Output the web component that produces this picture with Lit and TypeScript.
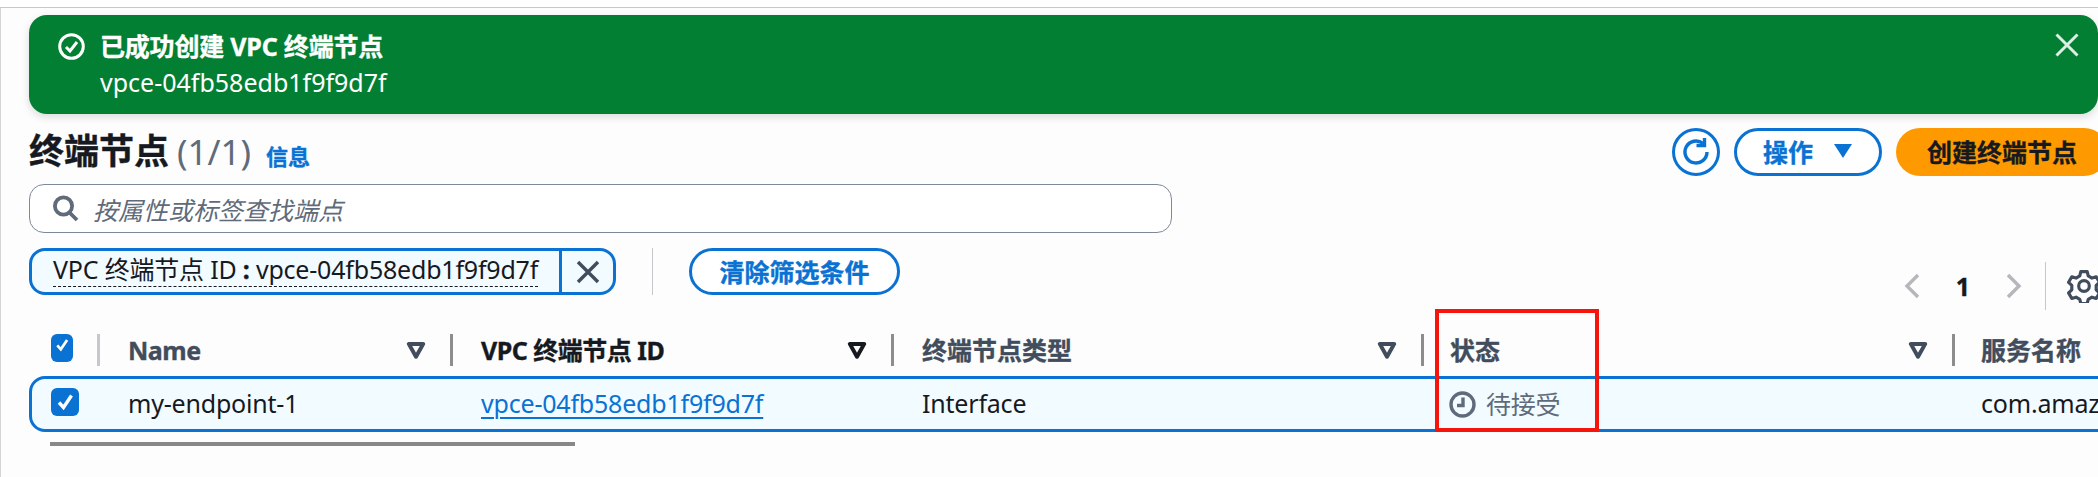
import { LitElement, html, css } from "lit";
import { customElement } from "lit/decorators.js";

const sortIcon = html`<svg class="sort" viewBox="0 0 18 18"><path d="M2.500 3.500h13L9 15z" fill="none" stroke="currentColor" stroke-width="3.600" stroke-linejoin="round"/></svg>`;
const checkIcon = html`<span class="check"><svg viewBox="0 0 28 28"><path d="M8 14.500l4.500 5L20.500 7.500" fill="none" stroke="#fff" stroke-width="3.400"/></svg></span>`;

@customElement("app-root")
export class AppRoot extends LitElement {
  static styles = css`
    :host {
      display: block;
      position: relative;
      width: 2098px;
      height: 477px;
      overflow: hidden;
      background: #fff;
      font-family: "Noto Sans", "Noto Sans CJK SC", sans-serif;
      font-size: 25px;
      color: #16191f;
    }
    b, .bold { -webkit-text-stroke: 0.35px currentColor; }
    .frame {
      box-sizing: border-box;
      height: 470px;
      margin-top: 7px;
      padding: 7px 0 0 28px;
      border-top: 1px solid #c8c8c8;
      border-left: 1px solid #d4d4d4;
      background: #fdfdfd;
    }
    .banner {
      display: flex;
      box-sizing: border-box;
      height: 99px;
      padding: 18px 20px 0 29px;
      border-radius: 18px;
      background: #037f33;
      box-shadow: 0 3px 8px rgba(0, 0, 0, 0.14);
      color: #fff;
    }
    .banner-icon { width: 27px; height: 27px; margin-right: 15px; flex: none; }
    .banner-body { flex: 1; line-height: 26px; }
    .banner-title { font-weight: 700; letter-spacing: -0.2px; }
    .banner-id { margin-top: 10px; }
    .banner-close { width: 24px; height: 24px; flex: none; margin-right: -1px; }
    .head { display: flex; align-items: center; height: 48px; margin-top: 14px; }
    .title { font-size: 35px; font-weight: 700; line-height: 46px; margin-bottom: 2px; }
    .count { font-size: 35px; color: #5f6b7a; margin-left: 8px; margin-bottom: 2px; }
    .info { font-size: 22px; font-weight: 700; color: #0972d3; margin-left: 15px; margin-top: 5px; }
    .actions { display: flex; gap: 14px; margin-left: auto; margin-right: -10px; }
    .btn {
      display: flex;
      align-items: center;
      justify-content: center;
      box-sizing: border-box;
      height: 48px;
      border: 3px solid #0972d3;
      border-radius: 24px;
      background: #fff;
      color: #0972d3;
      font-weight: 700;
      padding-bottom: 2px;
      -webkit-text-stroke: 0.35px currentColor;
    }
    .refresh { width: 48px; padding-bottom: 0; }
    .refresh svg { width: 32px; height: 32px; }
    .menu { width: 148px; gap: 20px; }
    .menu svg { width: 20px; height: 16px; }
    .create { width: 212px; justify-content: flex-start; padding-left: 31px; border: none; background: #ff9900; color: #16191f; }
    .search {
      display: flex;
      align-items: center;
      box-sizing: border-box;
      width: 1143px;
      height: 49px;
      margin-top: 8px;
      padding-left: 22px;
      border: 1px solid #7d8998;
      border-radius: 15px;
      background: #fff;
      color: #5f6b7a;
      font-style: italic;
    }
    .search svg { width: 27px; height: 27px; margin-right: 14px; }
    .filters { display: flex; align-items: flex-start; height: 62px; margin-top: 15px; }
    .chip {
      display: flex;
      box-sizing: border-box;
      width: 587px;
      height: 47px;
      border: 3px solid #0972d3;
      border-radius: 16px;
      background: #f2fbff;
    }
    .chip-text {
      box-sizing: border-box;
      width: 530px;
      padding: 1px 0 0 21px;
      border-right: 3px solid #0972d3;
      line-height: 34px;
      letter-spacing: -0.2px;
      white-space: nowrap;
    }
    .chip-text span { border-bottom: 1px dashed #16191f; display: inline-block; line-height: 33px; }
    .chip-close { display: flex; align-items: center; justify-content: center; flex: 1; color: #414d5c; }
    .chip-close svg { width: 26px; height: 26px; }
    .sep { width: 1px; height: 47px; margin: 0 36px; background: #c6c6cd; }
    .clear { width: 211px; height: 47px; }
    .pager { display: flex; align-items: center; height: 48px; margin: 14px 0 0 auto; color: #16191f; }
    .pager svg { width: 30px; height: 30px; }
    .pager b { width: 70px; text-align: center; font-weight: 700; }
    .pager .gear { width: 34px; height: 34px; margin-right: -3px; }
    .pager i { display: block; width: 1px; height: 48px; margin: 0 21px 0 17px; background: #c6c6cd; }
    .grid { display: grid; grid-template-columns: 68px 353px 441px 530px 531px 400px; }
    .thead { height: 32px; margin-top: 24px; color: #414d5c; font-weight: 700; }
    .th {
      display: flex;
      align-items: flex-start;
      box-sizing: border-box;
      padding: 0 24px 0 28px;
      border-left: 3px solid #8d8d8d;
      white-space: nowrap;
      -webkit-text-stroke: 0.35px currentColor;
    }
    .th-label { line-height: 32px; }
    .th.tight .th-label { letter-spacing: -0.5px; }
    .th:first-child { padding-left: 22px; border: none; }
    .th:nth-child(n + 5) { padding-left: 26px; }
    .th.dark { color: #16191f; }
    .th.first { border-left-color: #c6c6cd; }
    .sort { width: 20px; height: 20px; margin: 6px 0 0 auto; }
    .check {
      display: block;
      width: 28px;
      height: 28px;
      border-radius: 6px;
      background: #0972d3;
    }
    .check svg { display: block; }
    .tbody {
      box-sizing: border-box;
      height: 56px;
      margin: 10px -40px 0 0;
      border: 3px solid #0972d3;
      border-radius: 16px;
      background: #f2fbff;
      letter-spacing: -0.2px;
      grid-template-columns: 65px 353px 441px 530px 531px 400px;
    }
    .td { display: flex; align-items: center; padding-left: 31px; white-space: nowrap; }
    .td:first-child { padding-left: 19px; padding-bottom: 2px; }
    .td:last-child { padding-left: 29px; }
    .td span { margin-bottom: 3px; }
    .link { color: #0972d3; text-decoration: underline; text-decoration-thickness: 2px; text-underline-offset: 4px; }
    .status { color: #5f6b7a; gap: 10px; padding-left: 28px; }
    .status svg { width: 27px; height: 27px; }
    .scroll { width: 525px; height: 4px; margin: 10px 0 0 21px; background: #888; }
    .mark {
      position: absolute;
      left: 1435px;
      top: 309px;
      box-sizing: border-box;
      width: 164px;
      height: 123px;
      border: 4px solid #f5150d;
    }
  `;

  render() {
    return html`
      <div class="frame">
        <div class="banner">
          <svg class="banner-icon" viewBox="0 0 27 27" fill="none" stroke="#fff" stroke-width="3">
            <circle cx="13.500" cy="13.500" r="11.800" />
            <path d="M8 14l4 4 7-9" />
          </svg>
          <div class="banner-body">
            <div class="banner-title bold">已成功创建 VPC 终端节点</div>
            <div class="banner-id">vpce-04fb58edb1f9f9d7f</div>
          </div>
          <svg class="banner-close" viewBox="0 0 24 24" fill="none" stroke="#dfeee4" stroke-width="3">
            <path d="M1.500 1.500l21 21M22.500 1.500l-21 21" />
          </svg>
        </div>

        <div class="head">
          <span class="title bold">终端节点</span>
          <span class="count">(1/1)</span>
          <span class="info bold">信息</span>
          <div class="actions">
            <div class="btn refresh">
              <svg viewBox="0 0 32 32" fill="none" stroke="#0972d3" stroke-width="3.400">
                <path d="M27 16a11 11 0 1 1-4-8.500" />
                <path d="M24.500 2v7.500H16.500" />
              </svg>
            </div>
            <div class="btn menu">
              操作
              <svg viewBox="0 0 20 16"><path d="M1 1h18L10 15z" fill="#0972d3" /></svg>
            </div>
            <div class="btn create">创建终端节点</div>
          </div>
        </div>

        <div class="search">
          <svg viewBox="0 0 27 27" fill="none" stroke="#5f6b7a" stroke-width="3.800">
            <circle cx="11.500" cy="11" r="8.600" />
            <path d="M17.500 17.500l7.500 7.500" />
          </svg>
          按属性或标签查找端点
        </div>

        <div class="filters">
          <div class="chip">
            <div class="chip-text"><span>VPC 终端节点 ID <b>:</b> vpce-04fb58edb1f9f9d7f</span></div>
            <div class="chip-close">
              <svg viewBox="0 0 26 26" fill="none" stroke="currentColor" stroke-width="3.400">
                <path d="M3 3l20 20M23 3L3 23" />
              </svg>
            </div>
          </div>
          <div class="sep"></div>
          <div class="btn clear">清除筛选条件</div>
          <div class="pager">
            <svg viewBox="0 0 30 30" fill="none" stroke="#b4b7bb" stroke-width="3.400"><path d="M20 4L9 15l11 11" /></svg>
            <b>1</b>
            <svg viewBox="0 0 30 30" fill="none" stroke="#b4b7bb" stroke-width="3.400"><path d="M10 4l11 11-11 11" /></svg>
            <i></i>
            <svg class="gear" viewBox="0 0 32 32" fill="none" stroke="#414d5c" stroke-width="3" stroke-linejoin="round">
              <path d="M13 2.500h6l1 4 3.500 2 4-1.200 3 5.200-3 2.900v4.200l3 2.900-3 5.200-4-1.200-3.500 2-1 4h-6l-1-4-3.500-2-4 1.200-3-5.200 3-2.900v-4.200l-3-2.900 3-5.200 4 1.200 3.500-2z" />
              <circle cx="16" cy="16" r="5" />
            </svg>
          </div>
        </div>

        <div class="grid thead">
          <div class="th">${checkIcon}</div>
          <div class="th first tight"><span class="th-label">Name</span>${sortIcon}</div>
          <div class="th dark tight"><span class="th-label">VPC 终端节点 ID</span>${sortIcon}</div>
          <div class="th"><span class="th-label">终端节点类型</span>${sortIcon}</div>
          <div class="th"><span class="th-label">状态</span>${sortIcon}</div>
          <div class="th"><span class="th-label">服务名称</span></div>
        </div>

        <div class="grid tbody">
          <div class="td">${checkIcon}</div>
          <div class="td"><span>my-endpoint-1</span></div>
          <div class="td"><span class="link">vpce-04fb58edb1f9f9d7f</span></div>
          <div class="td"><span>Interface</span></div>
          <div class="td status">
            <svg viewBox="0 0 27 27" fill="none" stroke="#5f6b7a" stroke-width="3.400">
              <circle cx="13.500" cy="13.500" r="11.500" />
              <path d="M14 6.500v8H8" />
            </svg>
            <span>待接受</span>
          </div>
          <div class="td"><span>com.amazonaws.us-east-1</span></div>
        </div>

        <div class="scroll"></div>
      </div>
      <div class="mark"></div>
    `;
  }
}
